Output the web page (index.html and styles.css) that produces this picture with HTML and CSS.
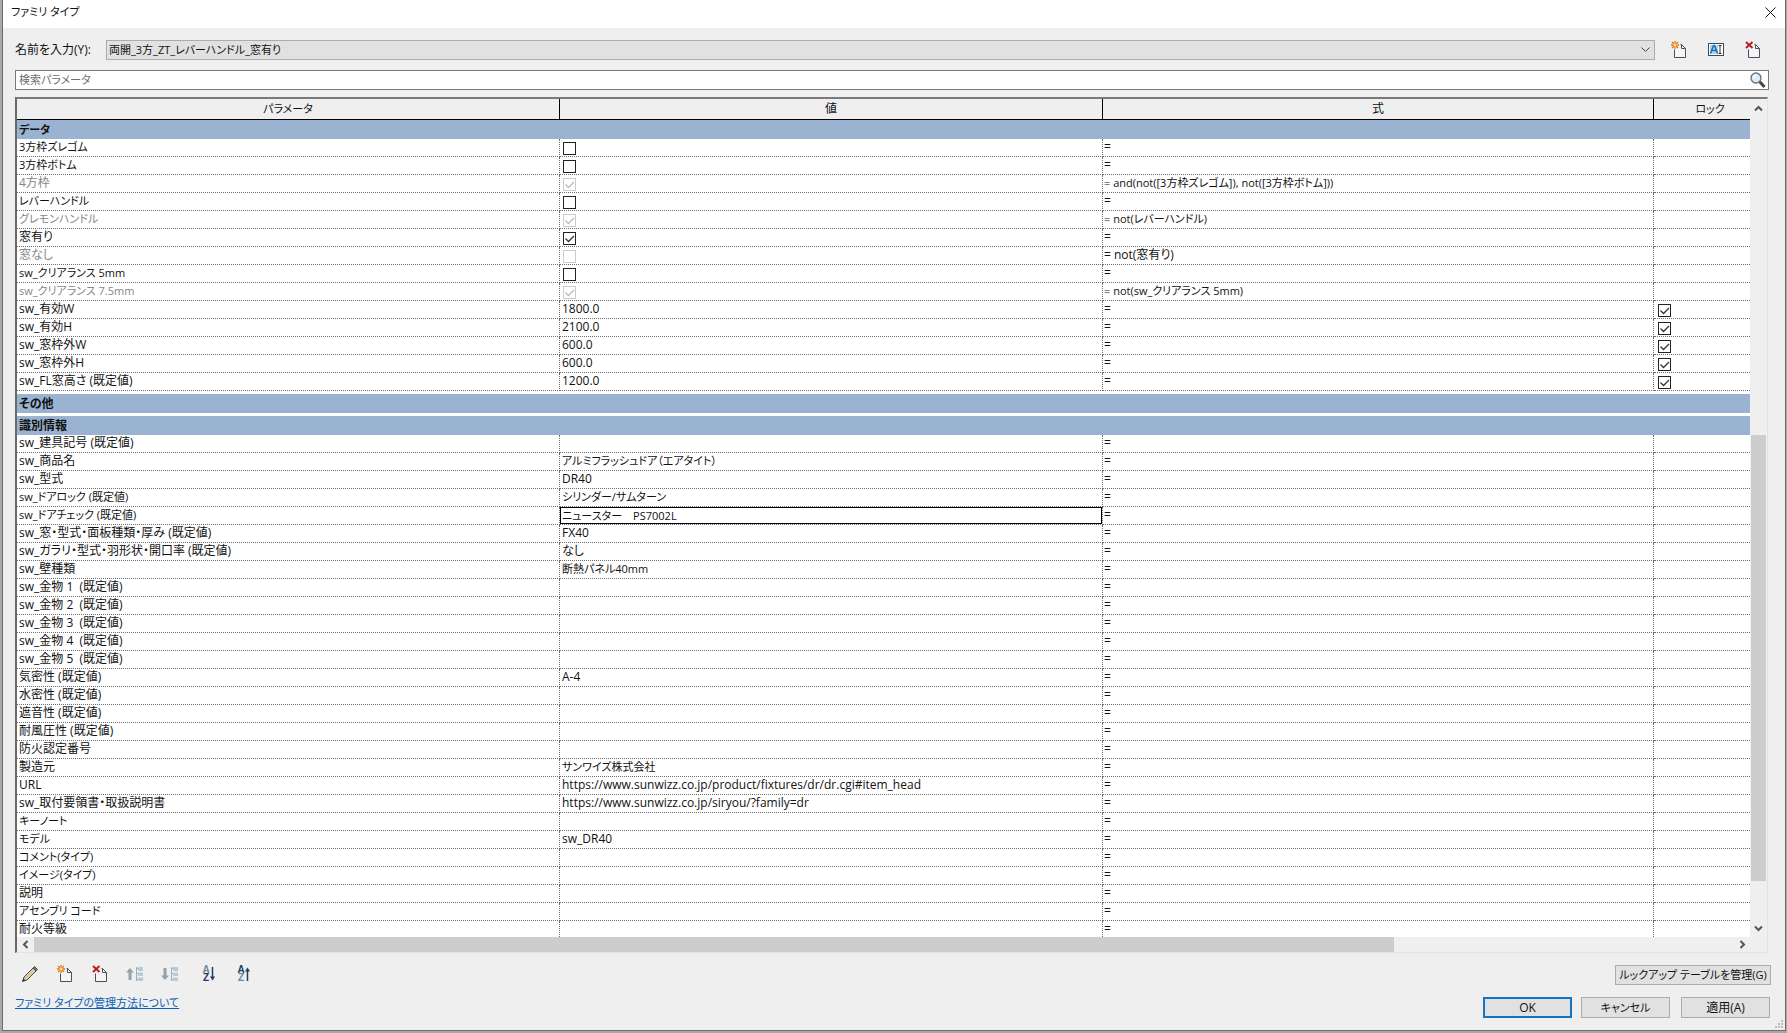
FILE: index.html
```html
<!DOCTYPE html>
<html lang="ja">
<head>
<meta charset="utf-8">
<title>ファミリ タイプ</title>
<link rel="stylesheet" href="styles.css">
</head>
<body>
<svg class="defs" width="0" height="0" aria-hidden="true">
  <symbol id="i-page" viewBox="0 0 16 18">
    <path d="M3.5 6.500H9.500V3.500L10.500 3.500L14.500 7.500V16.500H3.500Z" fill="#f4f5f8" stroke="none"/>
    <path d="M9.500 3.500H10.500L14.500 7.500V16.500H3.500V8.500M10.500 3.500V7.500H14.500" fill="none" stroke="#4c5057"/>
  </symbol>
  <symbol id="i-new" viewBox="0 0 16 18">
    <use href="#i-page" width="16" height="18"/>
    <path d="M4 0V8M0 4H8M1 1L7 7M7 1L1 7" stroke="#e0701c" stroke-width="1.300"/>
    <circle cx="4" cy="4" r="1.700" fill="#ffe36a"/>
  </symbol>
  <symbol id="i-del" viewBox="0 0 16 18">
    <use href="#i-page" width="16" height="18"/>
    <path d="M1 1L7.500 7M7.500 1L1 7" stroke="#b81f24" stroke-width="2"/>
  </symbol>
  <symbol id="i-tree" viewBox="0 0 8 16">
    <path d="M1.500 1V15M1.500 2.500H3M1.500 7.500H3M1.500 13.500H3" stroke="#a3acb3" fill="none"/>
    <path d="M3 1H8V5H3ZM3 6.500H8V10H3ZM3 11.500H8V15H3Z" fill="#b4cbdc"/>
  </symbol>
</svg>
<main class="dialog">
  <header class="titlebar">
    <h1 class="title">ファミリ タイプ</h1>
    <button class="close" aria-label="閉じる"><svg width="11" height="11" viewBox="0 0 11 11"><path d="M.5 .5L10.500 10.500M10.500 .5L.5 10.500" stroke="#111" fill="none"/></svg></button>
  </header>
  <div class="content">
    <div class="name-row">
      <label class="name-label" for="type-name">名前を入力(Y):</label>
      <select class="name-select kana" id="type-name"><option>両開_3方_ZT_レバーハンドル_窓有り</option></select>
      <div class="name-tools">
        <button class="icon-btn" aria-label="新規タイプ"><svg width="16" height="18"><use href="#i-new"/></svg></button>
        <button class="icon-btn" aria-label="名前変更"><svg width="16" height="14" viewBox="0 0 16 14"><rect x=".5" y=".5" width="15" height="12" fill="#fff" stroke="#3d4a55"/><rect x="2" y="2" width="8" height="9" fill="#a9d3ee"/><path d="M2.500 10.500L5.500 2.500H6.500L9.500 10.500M4 7.500H8" stroke="#1f6fb5" stroke-width="1.500" fill="none"/><path d="M10.500 2.500H13.500M12 2.500V10.500M10.500 10.500H13.500" stroke="#333" fill="none"/></svg></button>
        <button class="icon-btn" aria-label="タイプを削除"><svg width="16" height="18"><use href="#i-del"/></svg></button>
      </div>
    </div>
    <div class="search">
      <input class="search-input kana" type="text" placeholder="検索パラメータ" aria-label="検索パラメータ">
      <svg class="lens" width="16" height="17" viewBox="0 0 16 17"><path d="M9.500 9.500L14.500 15" stroke="#3f464c" stroke-width="3"/><circle cx="6" cy="6" r="5" fill="#dcebf3" stroke="#687680" stroke-width="1.400"/><path d="M3.500 6A3 3 0 0 1 6 3.200" stroke="#fff" stroke-width="1.300" fill="none"/></svg>
    </div>
    <div class="grid-box">
      <div class="viewport">
        <table class="params">
          <colgroup><col class="c-name"><col class="c-value"><col class="c-formula"><col class="c-lock"></colgroup>
          <thead><tr><th class="kana">パラメータ</th><th>値</th><th>式</th><th class="kana">ロック</th></tr></thead>
          <tbody id="rows"></tbody>
        </table>
      </div>
      <div class="vbar">
        <svg class="arrow" width="9" height="7" viewBox="0 0 9 7"><path d="M1 5.500L4.500 2L8 5.500" /></svg>
        <div class="vtrack"><div class="vthumb"></div></div>
        <svg class="arrow" width="9" height="7" viewBox="0 0 9 7"><path d="M1 1.500L4.500 5L8 1.500" /></svg>
      </div>
      <div class="hbar">
        <svg class="arrow" width="7" height="9" viewBox="0 0 7 9"><path d="M5.500 1L2 4.500L5.500 8" /></svg>
        <div class="htrack"><div class="hthumb"></div></div>
        <svg class="arrow" width="7" height="9" viewBox="0 0 7 9"><path d="M1.500 1L5 4.500L1.500 8" /></svg>
      </div>
    </div>
    <footer class="footer">
      <div class="foot-left">
        <div class="tools">
          <button class="tool" aria-label="編集"><svg width="18" height="18" viewBox="0 0 18 18"><path d="M1.500 16.500L3 12L13 2L16 5L6 15Z" fill="#d8c9a0" stroke="#4d4d4d"/><path d="M12 3L13.500 1.500L16.500 4.500L15 6Z" fill="#777" stroke="#4d4d4d"/><path d="M1.500 16.500L2.500 13.500L4.500 15.500Z" fill="#333"/></svg></button>
          <button class="tool" aria-label="新規パラメータ"><svg width="16" height="18"><use href="#i-new"/></svg></button>
          <button class="tool" aria-label="パラメータを削除"><svg width="16" height="18"><use href="#i-del"/></svg></button>
          <button class="tool" aria-label="上へ移動"><svg width="18" height="16" viewBox="0 0 18 16"><path d="M4 14V5" stroke="#98a1a8" stroke-width="3"/><path d="M0 6.500L4 2L8 6.500Z" fill="#98a1a8"/><use href="#i-tree" x="9" width="8" height="16"/></svg></button>
          <button class="tool" aria-label="下へ移動"><svg width="18" height="16" viewBox="0 0 18 16"><path d="M4 2V11" stroke="#98a1a8" stroke-width="3"/><path d="M0 9.500L4 14L8 9.500Z" fill="#98a1a8"/><use href="#i-tree" x="9" width="8" height="16"/></svg></button>
          <button class="tool sort" aria-label="昇順"><span class="az"><b class="top">A</b><b>Z</b></span><svg width="5" height="14" viewBox="0 0 5 14"><path d="M2.500 0V11" stroke="#263a5e" stroke-width="1.500"/><path d="M0 9.500H5L2.500 13.500Z" fill="#263a5e"/></svg></button>
          <button class="tool" aria-label="降順"><span class="az"><b>A</b><b class="top">Z</b></span><svg width="5" height="14" viewBox="0 0 5 14"><path d="M2.500 3V14" stroke="#263a5e" stroke-width="1.500"/><path d="M0 4.500H5L2.500 .5Z" fill="#263a5e"/></svg></button>
        </div>
        <a class="help kana" href="#help">ファミリ タイプの管理方法について</a>
      </div>
      <div class="foot-right">
        <button class="btn lookup kana">ルックアップ テーブルを管理(G)</button>
        <div class="actions">
          <button class="btn ok">OK</button>
          <button class="btn cancel kana">キャンセル</button>
          <button class="btn apply">適用(A)</button>
        </div>
      </div>
    </footer>
  </div>
  <svg class="grip" width="9" height="9" viewBox="0 0 9 9" fill="#bdbdbd"><path d="M6 0H8V2H6ZM3 3H5V5H3ZM6 3H8V5H6ZM0 6H2V8H0ZM3 6H5V8H3ZM6 6H8V8H6Z"/></svg>
</main>
<script src="rows.js"></script>
</body>
</html>
```
FILE: styles.css
```css
* { box-sizing: border-box; }

body {
  margin: 0;
  height: 100vh;
  padding: 0 1px 2px 2px;
  background: #a9a9a9;
  color: #111;
  font: 12px/16px "Open Sans", "Noto Sans CJK JP", sans-serif;
  font-feature-settings: "palt";
}

button, input, select { font: inherit; color: inherit; font-feature-settings: inherit; }
.defs { display: block; }

/* labels made up mostly of katakana are set one size down */
.kana { font-size: 11px; }

.dialog {
  position: relative;
  display: flex;
  flex-direction: column;
  height: 100%;
  border: 1px solid #6b6b6b;
  border-top: 0;
  background: #efefef;
}

.titlebar {
  display: flex;
  flex: none;
  align-items: center;
  justify-content: space-between;
  height: 28px;
  padding: 0 9px 4px 8px;
  background: #fff;
}
.title { margin: 0; font-size: 11px; font-weight: 400; }
.close { display: flex; padding: 0; border: 0; background: none; }

.content {
  display: flex;
  flex: 1;
  flex-direction: column;
  min-height: 0;
  padding: 12px 16px 12px 12px;
}

.name-row { display: flex; flex: none; align-items: center; height: 20px; }
.name-label { flex: none; width: 91px; }
.name-select {
  flex: 1;
  min-width: 0;
  height: 20px;
  padding: 0 2px;
  border: 1px solid #acacac;
  border-radius: 0;
  appearance: none;
  background: #e1e1e1 url("data:image/svg+xml,%3Csvg xmlns='http://www.w3.org/2000/svg' width='9' height='6'%3E%3Cpath d='M.5 .5L4.500 4.500L8.500 .5' fill='none' stroke='%23444'/%3E%3C/svg%3E") no-repeat right 4px center;
}
.name-tools { display: flex; flex: none; width: 114px; padding-left: 5px; }
.icon-btn {
  display: flex;
  flex: none;
  align-items: center;
  justify-content: center;
  width: 37px;
  height: 20px;
  padding: 0;
  border: 0;
  background: none;
}

.search {
  display: flex;
  flex: none;
  align-items: center;
  height: 20px;
  margin-top: 10px;
  padding-right: 2px;
  border: 1px solid #7a7a7a;
  background: #fff;
}
.search-input {
  flex: 1;
  min-width: 0;
  height: 18px;
  padding: 0 3px 2px;
  border: 0;
  outline: 0;
  background: none;
}
.search-input::placeholder { color: #6d6d6d; opacity: 1; }

.grid-box {
  display: grid;
  flex: 1;
  grid-template-columns: 1fr 17px;
  grid-template-rows: 1fr 15px;
  min-height: 0;
  margin: 7px 1px 0 0;
  border: 1px solid #e3e3e3;
  border-top: 2px solid #7a7a7a;
  border-left: 2px solid #696969;
}
.viewport { min-width: 0; overflow: hidden; background: #fff; }

.params { width: 100%; border-spacing: 0; table-layout: fixed; }
.c-name, .c-value { width: 543px; }
.c-formula { width: 551px; }
.c-lock { width: 96px; }
.params th {
  height: 21px;
  padding: 0;
  border-right: 1px solid #000;
  border-bottom: 1px solid #000;
  background: #efefef;
  font-weight: 400;
  line-height: 16px;
  white-space: nowrap;
}
.params th:last-child { border-right: 0; padding-left: 16px; }
.params td {
  height: 18px;
  padding: 0 2px;
  overflow: hidden;
  border-right: 1px dotted #6d6d6d;
  border-bottom: 1px dotted #6d6d6d;
  line-height: 16px;
  vertical-align: top;
  white-space: pre;
}
.params td:nth-child(3) { padding-left: 1px; }
.params td:last-child { border-right: 0; padding-left: 3px; }
.params .band th {
  height: 19px;
  padding: 0 2px;
  border: 0;
  background: #99b3d0;
  font-weight: 700;
  line-height: 18px;
  text-align: left;
}
.params .gap td { height: 3px; padding: 0; border: 0; line-height: 3px; }
.params .dim { color: #868686; }
.params td.editing { padding: 0; }

.cell-input {
  display: block;
  width: 100%;
  height: 17px;
  padding: 0 1px 1px;
  border: 1px solid #000;
  outline: 0;
  background: #fff;
}

.check {
  display: block;
  width: 13px;
  height: 13px;
  margin: 3px 0 0 1px;
  border: 1px solid #222;
  appearance: none;
  background: #fff center no-repeat;
}
.check:checked { background-image: url("data:image/svg+xml,%3Csvg xmlns='http://www.w3.org/2000/svg' width='11' height='11'%3E%3Cpath d='M1.500 5.500L4.500 8.500L10 3' fill='none' stroke='%23333' stroke-width='1.300'/%3E%3C/svg%3E"); }
.check:disabled { border-color: #ccc; }
.check:disabled:checked { background-image: url("data:image/svg+xml,%3Csvg xmlns='http://www.w3.org/2000/svg' width='11' height='11'%3E%3Cpath d='M1.500 5.500L4.500 8.500L10 3' fill='none' stroke='%23bbb' stroke-width='1.300'/%3E%3C/svg%3E"); }

.arrow { flex: none; fill: none; stroke: #555; stroke-width: 2; }
.vbar { display: flex; flex-direction: column; align-items: center; padding: 6px 0 5px; }
.vtrack { flex: 1; width: 15px; padding-top: 323px; }
.vthumb { height: 91%; background: #cdcdcd; }
.hbar { display: flex; grid-column: 1 / 3; align-items: center; padding: 0 21px 0 5px; }
.htrack { flex: 1; height: 15px; margin: 0 5px; }
.hthumb { width: 80%; height: 15px; background: #cdcdcd; }

.footer { display: flex; flex: none; justify-content: space-between; height: 65px; }
.foot-left { display: flex; flex-direction: column; align-items: flex-start; padding-top: 10px; }
.tools { display: flex; height: 22px; margin-left: -3px; }
.tool {
  display: flex;
  align-items: center;
  justify-content: center;
  width: 35px;
  height: 22px;
  padding: 0;
  border: 0;
  background: none;
}
.sort { margin-left: 4px; }
.az { display: flex; flex-direction: column; font: 700 10px/8px "Liberation Sans", sans-serif; color: #263a5e; }
.az .top { color: #6f86a3; }
.help { margin-top: 10px; color: #0b62b5; }

.foot-right { display: flex; flex-direction: column; align-items: flex-end; margin-right: -2px; padding-top: 12px; }
.actions { display: flex; padding-right: 1px; margin-top: 12px; }
.btn {
  height: 21px;
  padding: 0;
  border: 1px solid #acacac;
  background: #e1e1e1;
  line-height: 16px;
  white-space: nowrap;
}
.lookup { width: 156px; }
.ok, .cancel, .apply { width: 89px; }
.ok { border: 2px solid #1474c4; }
.cancel { margin-left: 9px; }
.apply { margin-left: 11px; }

.grip { position: absolute; right: 1px; bottom: 1px; }
```
FILE: rows.js
```js
// kind of value: "off" / "on" are tick boxes, anything else is text
const groups = [
  ["データ", [
    ["3方枠ズレゴム", "off"],
    ["3方枠ボトム", "off"],
    ["4方枠", "on", "and(not([3方枠ズレゴム]), not([3方枠ボトム]))"],
    ["レバーハンドル", "off"],
    ["グレモンハンドル", "on", "not(レバーハンドル)"],
    ["窓有り", "on"],
    ["窓なし", "off", "not(窓有り)"],
    ["sw_クリアランス 5mm", "off"],
    ["sw_クリアランス 7.5mm", "on", "not(sw_クリアランス 5mm)"],
    ["sw_有効W", "1800.0", "", true],
    ["sw_有効H", "2100.0", "", true],
    ["sw_窓枠外W", "600.0", "", true],
    ["sw_窓枠外H", "600.0", "", true],
    ["sw_FL窓高さ (既定値)", "1200.0", "", true]
  ]],
  ["その他", []],
  ["識別情報", [
    ["sw_建具記号 (既定値)", ""],
    ["sw_商品名", "アルミフラッシュドア（エアタイト）"],
    ["sw_型式", "DR40"],
    ["sw_ドアロック (既定値)", "シリンダー/サムターン"],
    ["sw_ドアチェック (既定値)", "ニュースター　PS7002L", "", false, true],
    ["sw_窓・型式・面板種類・厚み (既定値)", "FX40"],
    ["sw_ガラリ・型式・羽形状・開口率 (既定値)", "なし"],
    ["sw_壁種類", "断熱パネル40mm"],
    ["sw_金物 1  (既定値)", ""],
    ["sw_金物 2  (既定値)", ""],
    ["sw_金物 3  (既定値)", ""],
    ["sw_金物 4  (既定値)", ""],
    ["sw_金物 5  (既定値)", ""],
    ["気密性 (既定値)", "A-4"],
    ["水密性 (既定値)", ""],
    ["遮音性 (既定値)", ""],
    ["耐風圧性 (既定値)", ""],
    ["防火認定番号", ""],
    ["製造元", "サンワイズ株式会社"],
    ["URL", "https://www.sunwizz.co.jp/product/fixtures/dr/dr.cgi#item_head"],
    ["sw_取付要領書・取扱説明書", "https://www.sunwizz.co.jp/siryou/?family=dr"],
    ["キーノート", ""],
    ["モデル", "sw_DR40"],
    ["コメント(タイプ)", ""],
    ["イメージ(タイプ)", ""],
    ["説明", ""],
    ["アセンブリ コード", ""],
    ["耐火等級", ""]
  ]]
];

const body = document.getElementById("rows");

// true where katakana make up a good part of the text
function isKana(text) {
  const found = text.match(/[ァ-ヺー]/g);
  return Boolean(found) && found.length / text.length > 0.15;
}

function setText(element, text) {
  element.textContent = text;
  if (isKana(text)) element.classList.add("kana");
}

function tick(label, checked, disabled) {
  const box = document.createElement("input");
  box.type = "checkbox";
  box.className = "check";
  box.checked = checked;
  box.disabled = disabled;
  box.setAttribute("aria-label", label);
  return box;
}

groups.forEach(([heading, rows], index) => {
  if (index > 0) {
    const gap = body.insertRow();
    gap.className = "gap";
    gap.insertCell().colSpan = 4;
  }
  const band = body.insertRow();
  band.className = "band";
  const th = document.createElement("th");
  th.colSpan = 4;
  setText(th, heading);
  band.append(th);

  rows.forEach(([name, value, formula, locked, editing]) => {
    const row = body.insertRow();
    const nameCell = row.insertCell();
    setText(nameCell, name);
    if (formula) nameCell.classList.add("dim");

    const valueCell = row.insertCell();
    if (value === "on" || value === "off") {
      valueCell.append(tick(name, value === "on", Boolean(formula)));
    } else if (editing) {
      const input = document.createElement("input");
      input.type = "text";
      input.className = "cell-input kana";
      input.value = value;
      input.setAttribute("aria-label", name);
      valueCell.className = "editing";
      valueCell.append(input);
    } else {
      setText(valueCell, value);
    }

    setText(row.insertCell(), formula ? "= " + formula : "=");
    const lockCell = row.insertCell();
    if (locked) lockCell.append(tick(name + " ロック", true, false));
  });
});
```
